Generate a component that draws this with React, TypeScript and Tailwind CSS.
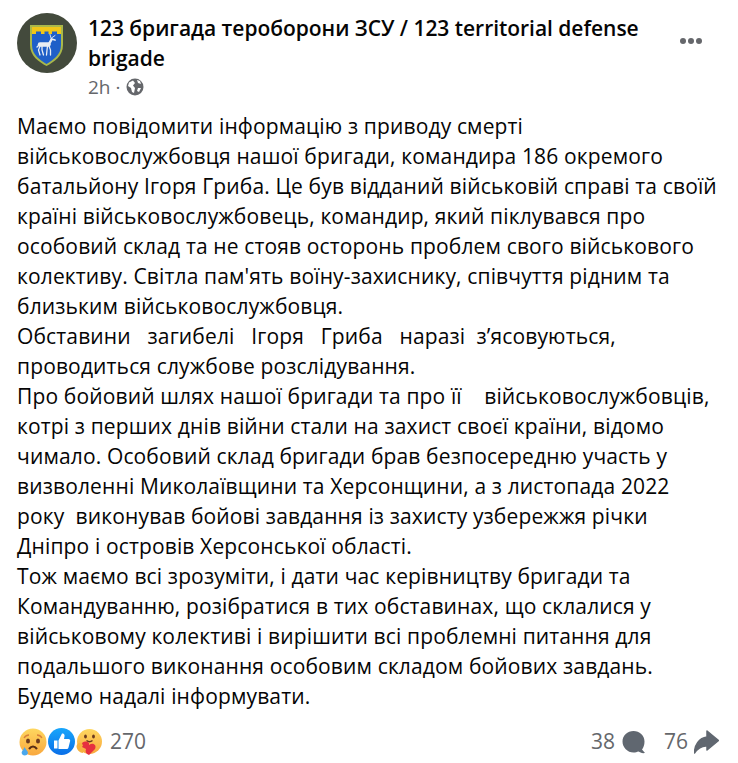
import React from 'react';

const lines = [
  'Маємо повідомити інформацію з приводу смерті',
  'військовослужбовця нашої бригади, командира 186 окремого',
  'батальйону Ігоря Гриба. Це був відданий військовій справі та своїй',
  'країні військовослужбовець, командир, який піклувався про',
  'особовий склад та не стояв осторонь проблем свого військового',
  "колективу. Світла пам'ять воїну-захиснику, співчуття рідним та",
  'близьким військовослужбовця.',
  'Обставини   загибелі   Ігоря   Гриба   наразі  з’ясовуються,',
  'проводиться службове розслідування.',
  'Про бойовий шлях нашої бригади та про її    військовослужбовців,',
  'котрі з перших днів війни стали на захист своєї країни, відомо',
  'чимало. Особовий склад бригади брав безпосередню участь у',
  'визволенні Миколаївщини та Херсонщини, а з листопада 2022',
  'року  виконував бойові завдання із захисту узбережжя річки',
  'Дніпро і островів Херсонської області.',
  'Тож маємо всі зрозуміти, і дати час керівництву бригади та',
  'Командуванню, розібратися в тих обставинах, що склалися у',
  'військовому колективі і вирішити всі проблемні питання для',
  'подальшого виконання особовим складом бойових завдань.',
  'Будемо надалі інформувати.',
];

const Avatar = () => (
  <svg width="60" height="60" viewBox="0 0 60 60" className="shrink-0">
    <circle cx="30" cy="30" r="30" fill="#434a3c" />
    <path d="M13 12 H46 V32 C46 43 37 49 29.500 53 C22 49 13 43 13 32 Z" fill="#a9b84a" />
    <path d="M15 14 H44 V32 C44 42 36 47 29.500 51 C23 47 15 42 15 32 Z" fill="#1f5fc8" />
    <path d="M15 14 H44 V21 H40 V18.500 H35 V21 H31.500 V18.500 H27.500 V21 H24 V18.500 H19 V21 H15 Z" fill="#f0c619" />
    <g fill="none" stroke="#e8edf3" strokeLinecap="round">
      <path d="M23 31.500 H31.500" strokeWidth="4.500" />
      <path d="M32 31 L34.500 26.500" strokeWidth="2.500" />
      <path d="M34.500 26 L38 27" strokeWidth="1.800" />
      <path d="M34 25 L33 21.500 M34.500 25 L38 22.500" strokeWidth="0.900" />
      <path d="M22 32 L20 34" strokeWidth="1.300" />
      <path d="M23 33 L21.500 37 L23 42 M25 33 L25 37 L26.500 42 M30.500 33 L30 37 L29.500 42 M32 33 L33.500 37 L33.500 42" strokeWidth="1.300" />
    </g>
  </svg>
);

const Sad = () => (
  <svg width="28" height="28" viewBox="0 0 28 28">
    <defs>
      <linearGradient id="sadFace" x1="0" y1="0" x2="0" y2="1">
        <stop offset="0" stopColor="#fed75f" />
        <stop offset="1" stopColor="#f9a83f" />
      </linearGradient>
    </defs>
    <circle cx="14" cy="14" r="13.500" fill="url(#sadFace)" />
    <path d="M5 10 Q7 7 10 7" stroke="#d9803a" strokeWidth="1.300" fill="none" />
    <path d="M18 7 Q21 7 23 10" stroke="#d9803a" strokeWidth="1.300" fill="none" />
    <ellipse cx="9" cy="13" rx="2" ry="2.600" fill="#6b3a1e" />
    <ellipse cx="19" cy="13" rx="2" ry="2.600" fill="#6b3a1e" />
    <path d="M10 21 Q14 16 18 21" stroke="#5a2e14" strokeWidth="2.200" fill="none" />
    <path d="M5.500 19 C7 22 9.500 23.500 8.800 25.500 C8 28 3.500 28 2.800 25.500 C2.200 23.500 4.500 22 5.500 19 Z" fill="#4aa8ee" />
  </svg>
);

const Like = () => (
  <svg width="27" height="27" viewBox="0 0 27 27" className="ml-[1px]">
    <defs>
      <linearGradient id="likeFace" x1="0" y1="0" x2="0" y2="1">
        <stop offset="0" stopColor="#18a6fb" />
        <stop offset="1" stopColor="#0a6fe8" />
      </linearGradient>
    </defs>
    <circle cx="13.500" cy="13.500" r="13.500" fill="url(#likeFace)" />
    <path d="M6 12.500 H9.500 V20.500 H6 Z M10.500 12.500 L14 5.500 C15.800 5 17 6.500 16.500 8.500 L16 11 H20.500 C22 11 22.500 12.500 22 13.500 L20.500 19.500 C20.200 20.500 19.500 21 18.500 21 H10.500 Z" fill="#ffffff" />
  </svg>
);

const Care = () => (
  <svg width="26" height="27" viewBox="0 0 26 27" className="ml-[1px]">
    <defs>
      <linearGradient id="careFace" x1="0" y1="0" x2="0" y2="1">
        <stop offset="0" stopColor="#fed75f" />
        <stop offset="1" stopColor="#f9a83f" />
      </linearGradient>
    </defs>
    <circle cx="13.500" cy="13.500" r="12.500" fill="url(#careFace)" />
    <ellipse cx="9.500" cy="8.500" rx="1.400" ry="1.900" fill="#6b3a1e" />
    <ellipse cx="17.500" cy="8.500" rx="1.400" ry="1.900" fill="#6b3a1e" />
    <path d="M10.500 12.500 Q13.500 15 16.500 12.500" stroke="#6b3a1e" strokeWidth="1.500" fill="none" />
    <path d="M6 15 C10 12 14 14 13 17 C17 14 21 17 19 21 L13 27 C10 26 9 24 10 21 L6 19 Z" fill="#e6303f" />
    <path d="M0.500 18 C1 15 4 14 6 15 L7 18 L4 20 L8 22 L7 25 C4 25 0.500 22 0.500 18 Z" fill="#f6b23f" />
  </svg>
);

const App: React.FC = () => {
  return (
    <div className="w-[738px] h-[763px] bg-white overflow-hidden font-['Open_Sans','Noto_Sans',sans-serif] text-[#050505]">
      {/* Header */}
      <div className="flex items-start pt-[13px] pl-[17px] pr-[36px]">
        <Avatar />
        <div className="ml-[11px] flex-1">
          <div className="text-[21px] tracking-[-0.03px] leading-[30px] font-semibold w-[570px]">
            123 бригада тероборони ЗСУ / 123 territorial defense brigade
          </div>
          <div className="flex items-center text-[19px] leading-[24px] text-[#65676b] mt-[2px]">
            <span>2h</span>
            <span className="mx-[5px]">·</span>
            <svg width="18" height="18" viewBox="0 0 18 18">
              <circle cx="9" cy="9" r="8.500" fill="#65676b" />
              <path d="M3 4.500 L7 2.500 L9 5 L7 7.500 L9 10 L8 15 L6 14 L5 10 L2 8 Z M12 10 L15 10 L13 14 L11 13 Z M11 2 L14 3 L15 6 L12 5 Z" fill="#ffffff" />
            </svg>
          </div>
        </div>
        <div className="flex gap-[2px] mt-[25px]">
          <span className="w-[6px] h-[6px] rounded-full bg-[#65676b]" />
          <span className="w-[6px] h-[6px] rounded-full bg-[#65676b]" />
          <span className="w-[6px] h-[6px] rounded-full bg-[#65676b]" />
        </div>
      </div>

      {/* Post text */}
      <div className="mt-[12px] pl-[17px] text-[21px] tracking-[0.14px] leading-[30px] whitespace-pre">
        {lines.map((line, i) => (
          <div key={i}>{line}</div>
        ))}
      </div>

      {/* Footer */}
      <div className="flex items-center justify-between pl-[19px] pr-[19px] mt-[15px]">
        <div className="flex items-center">
          <Sad />
          <Like />
          <Care />
          <span className="ml-[8px] text-[21px] text-[#65676b]">270</span>
        </div>
        <div className="flex items-center text-[21px] text-[#65676b]">
          <span>38</span>
          <svg width="23" height="24" viewBox="0 0 23 24" className="ml-[7px]">
            <path d="M11.500 1 C17.500 1 22.500 5.500 22.500 11.500 C22.500 15 21.500 17.500 20 19.500 L23 23 C20 23.500 18 22.500 16.500 21.500 C15 22 13.500 22.500 11.500 22.500 C5.500 22.500 0.500 17.500 0.500 11.500 C0.500 5.500 5.500 1 11.500 1 Z" fill="#606770" />
          </svg>
          <span className="ml-[19px]">76</span>
          <svg width="25" height="24" viewBox="0 0 25 24" className="ml-[6px]">
            <path d="M13 1 L24.500 10.500 L13 20 L13 16 C8 15.500 4 18 0.500 23 C0.500 15 5 8 13 7 Z" fill="#606770" stroke="#606770" strokeWidth="1.500" strokeLinejoin="round" />
          </svg>
        </div>
      </div>
    </div>
  );
};

export default App;
